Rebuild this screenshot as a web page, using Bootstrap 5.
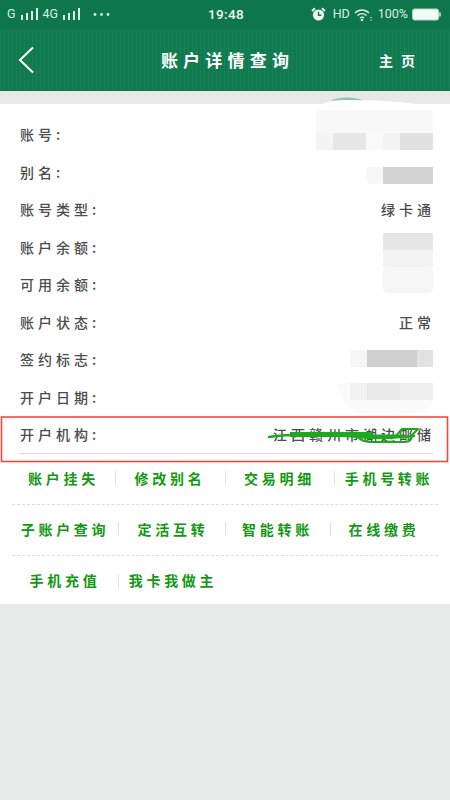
<!DOCTYPE html>
<html lang="zh">
<head>
<meta charset="utf-8">
<title>账户详情查询</title>
<link href="https://cdn.jsdelivr.net/npm/bootstrap@5.3.0/dist/css/bootstrap.min.css" rel="stylesheet">
<style>
html,body{width:450px;height:800px;overflow:hidden;margin:0;background:#e6e9e8;font-family:"Noto Sans CJK SC","Noto Sans",sans-serif}
.stage{width:450px;height:800px;background:#e6e9e8}
.sbar{height:29px;background:#0d774b;color:#dcefe5;font-family:Roboto,"Liberation Sans",sans-serif;font-size:12.5px;padding:0 9px 0 7px}
.sbar-side{width:180px}
.sbar-time{font-size:13.5px;font-weight:500;letter-spacing:.3px;color:#eef7f2;margin-left:4px}
.sbar-alarm{margin-right:3px}
.sbar-hd{font-size:12.5px}
.sbar-pct{font-size:12.5px;margin-left:2px}
.hdr{height:62px;color:#fff;padding:0 35px 0 18px;background-color:#117c50;
 background-image:repeating-linear-gradient(90deg,rgba(255,255,255,.035) 0 1px,transparent 1px 4px),repeating-linear-gradient(0deg,rgba(0,0,0,.035) 0 1px,transparent 1px 4px)}
.hdr-back{width:58px}
.hdr-title{font-size:17px;letter-spacing:5.200px;font-weight:700;text-align:center}
.hdr-home{font-size:14px;font-weight:700;gap:8px}
.detail{margin-top:13px;background:#fff;height:500px;padding-top:12px}
.info-row{height:37.5px;margin:0 17px 0 20px;color:#4c4c4c;font-size:14px;font-weight:500;letter-spacing:4px}
.info-val{margin-right:-2px}
.info-last{border-bottom:1px solid #ddd;height:37.5px;margin:0 17px 0 19px;padding-left:1px}
.acts{margin:0 12px;color:#129912;font-size:14px;font-weight:700;letter-spacing:3.7px}
.act-row{height:51px;border-bottom:1px dashed #ddd;white-space:nowrap;padding-bottom:1px}
.act-row:last-child{border-bottom:0}
.act-cell{text-align:center;position:relative}
.cell-a{width:103px}.cell-b{width:110px}.cell-c{width:109px}.cell-d{width:104px;padding-left:6px}
.cell-e{width:106px}.cell-f{width:107px;padding-left:3px}.cell-g{width:105px}.cell-h{width:108px}
.act-cell+.act-cell::before{content:"";position:absolute;left:0;top:50%;height:14px;margin-top:-7px;border-left:1px solid #e2e2e2}
.mask{position:fixed;left:0;top:0;pointer-events:none}
</style>
</head>
<body>
<div class="stage">
  <div class="sbar d-flex align-items-center justify-content-between">
    <div class="sbar-side d-flex align-items-center gap-1">
      <span>G</span>
      <svg width="19" height="13" viewBox="0 0 19 13" fill="#dcefe5"><rect x="1" y="7" width="2" height="5"/><rect x="6" y="5" width="2" height="7"/><rect x="11" y="3" width="2" height="9"/><rect x="16" y="0" width="2" height="12"/></svg>
      <span>4G</span>
      <svg width="19" height="13" viewBox="0 0 19 13" fill="#dcefe5"><rect x="1" y="7" width="2" height="5"/><rect x="6" y="5" width="2" height="7"/><rect x="11" y="3" width="2" height="9"/><rect x="16" y="0" width="2" height="12"/></svg>
      <svg class="ms-2" width="17" height="5" viewBox="0 0 17 5" fill="#dcefe5"><circle cx="2" cy="2.5" r="1.4"/><circle cx="8.5" cy="2.5" r="1.4"/><circle cx="15" cy="2.5" r="1.4"/></svg>
    </div>
    <div class="sbar-time">19:48</div>
    <div class="sbar-side d-flex align-items-center justify-content-end gap-1">
      <svg class="sbar-alarm" width="15" height="15" viewBox="0 0 15 15"><circle cx="7.5" cy="8" r="5.6" fill="#eef7f2"/><path d="M7.5 4.8V8.3H10.4" fill="none" stroke="#0d774b" stroke-width="1.4"/><path d="M1 4 4 1.2M14 4 11 1.2" stroke="#eef7f2" stroke-width="2"/></svg>
      <span class="sbar-hd">HD</span>
      <svg width="18" height="14" viewBox="0 0 18 14" fill="none" stroke="#dcefe5" stroke-width="1.4"><path d="M1 5C5 1 11 1 15 5"/><path d="M3.500 7.500C6 5 10 5 12.500 7.500"/><path d="M6 10C7 9 9 9 10 10"/><circle cx="8" cy="12" r=".6"/><path d="M17 9v1M17 11.500v1"/></svg>
      <span class="sbar-pct">100%</span>
      <svg width="29" height="13" viewBox="0 0 29 13"><rect x=".6" y="1" width="26" height="11" rx="2" fill="#f4faf7" stroke="#bcd9ca"/><rect x="27.200" y="4.500" width="1.600" height="4" fill="#cfe5da"/></svg>
    </div>
  </div>

  <div class="hdr d-flex align-items-center">
    <div class="hdr-back d-flex"><svg width="16" height="28" viewBox="0 0 16 28" fill="none" stroke="#fff" stroke-width="2"><path d="M15 1.500 2 14l13 12.500"/></svg></div>
    <div class="hdr-title flex-fill">账户详情查询</div>
    <div class="hdr-home d-flex"><span>主</span><span>页</span></div>
  </div>

  <div class="detail">
    <div class="info-row d-flex align-items-center justify-content-between"><span>账号:</span></div>
    <div class="info-row d-flex align-items-center justify-content-between"><span>别名:</span></div>
    <div class="info-row d-flex align-items-center justify-content-between"><span>账号类型:</span><span class="info-val">绿卡通</span></div>
    <div class="info-row d-flex align-items-center justify-content-between"><span>账户余额:</span></div>
    <div class="info-row d-flex align-items-center justify-content-between"><span>可用余额:</span></div>
    <div class="info-row d-flex align-items-center justify-content-between"><span>账户状态:</span><span class="info-val">正常</span></div>
    <div class="info-row d-flex align-items-center justify-content-between"><span>签约标志:</span></div>
    <div class="info-row d-flex align-items-center justify-content-between"><span>开户日期:</span></div>
    <div class="info-row info-last d-flex align-items-center justify-content-between"><span>开户机构:</span><span class="info-val">江西赣州市湖边邮储</span></div>

    <div class="acts">
      <div class="act-row d-flex align-items-center">
        <div class="act-cell cell-a">账户挂失</div><div class="act-cell cell-b">修改别名</div><div class="act-cell cell-c">交易明细</div><div class="act-cell cell-d">手机号转账</div>
      </div>
      <div class="act-row d-flex align-items-center">
        <div class="act-cell cell-e">子账户查询</div><div class="act-cell cell-f">定活互转</div><div class="act-cell cell-g">智能转账</div><div class="act-cell cell-h">在线缴费</div>
      </div>
      <div class="act-row d-flex align-items-center">
        <div class="act-cell cell-e">手机充值</div><div class="act-cell cell-f">我卡我做主</div>
      </div>
    </div>
  </div>
</div>

<svg class="mask" width="450" height="800" viewBox="0 0 450 800">
  <ellipse cx="347" cy="103" rx="17" ry="5.500" fill="#8fc4ab"/>
  <path d="M316 112Q318 100 345 100Q410 100 433 108V150H316Z" fill="#fff"/>
  <rect x="316" y="110" width="117" height="40" rx="4" fill="#f8f8f8"/>
  <rect x="316" y="133" width="17" height="17" fill="#f4f4f4"/><rect x="333" y="133" width="33" height="17" fill="#e7e7e7"/><rect x="366" y="133" width="17" height="17" fill="#fafafa"/><rect x="383" y="133" width="17" height="17" fill="#f3f3f3"/><rect x="400" y="133" width="33" height="17" fill="#e1e1e1"/>
  <rect x="366" y="167" width="17" height="17" rx="4" fill="#f7f7f7"/><rect x="383" y="167" width="50" height="17" fill="#d2d2d2"/>
  <rect x="383" y="233" width="50" height="17" fill="#e6e6e6"/><rect x="383" y="250" width="50" height="17" fill="#f3f3f3"/><rect x="383" y="267" width="50" height="26" rx="5" fill="#f6f6f6"/>
  <rect x="350" y="350" width="17" height="17" fill="#f6f6f6"/><rect x="367" y="350" width="50" height="17" fill="#d0d0d0"/><rect x="417" y="350" width="16" height="17" fill="#e2e2e2"/>
  <path d="M336 383H433V405Q420 416 395 416H365Q345 410 336 383Z" fill="#fbfbfb"/>
  <rect x="350" y="383" width="17" height="17" fill="#f2f2f2"/><rect x="367" y="383" width="33" height="17" fill="#e8e8e8"/><rect x="400" y="383" width="33" height="17" fill="#efefef"/>
  <path d="M290 434.500H372" stroke="#20a720" stroke-width="5"/>
  <path d="M372 436H405" stroke="#20a720" stroke-width="3"/>
  <path d="M269 437C285 434 330 434 358 437S395 437 414 436" fill="none" stroke="#20a720" stroke-width="2.400" stroke-linecap="round"/>
  <path d="M358 437Q362 442 372 442H405Q412 442 411 436L418 429H402L396 436" fill="none" stroke="#20a720" stroke-width="2.200" stroke-linejoin="round"/>
  <rect x="1.500" y="417" width="446" height="44.500" fill="none" stroke="#ee4b40" stroke-width="1.600"/>
</svg>
<script src="https://cdn.jsdelivr.net/npm/bootstrap@5.3.0/dist/js/bootstrap.bundle.min.js"></script>
</body>
</html>
